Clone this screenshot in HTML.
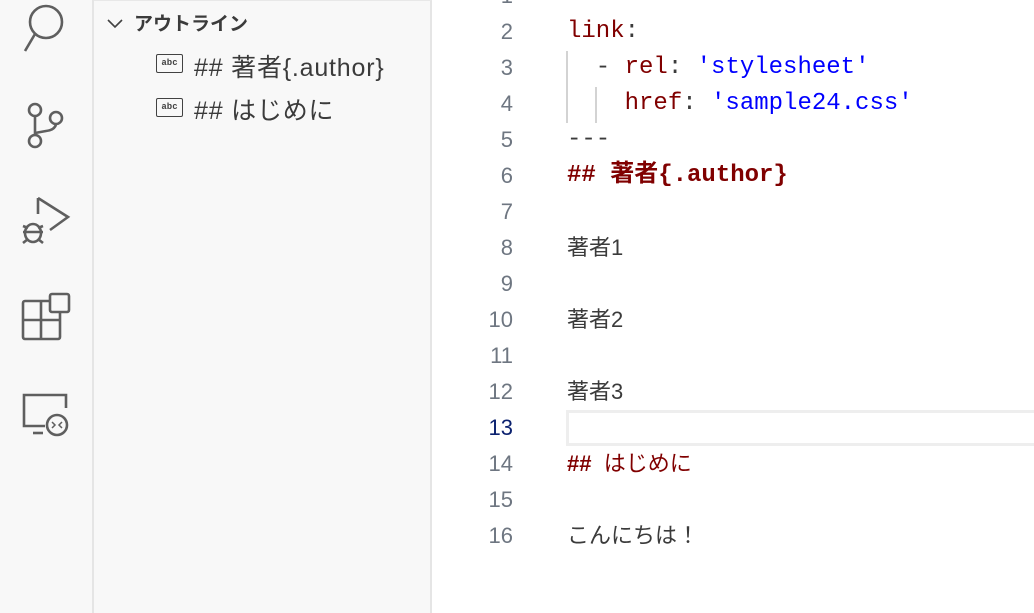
<!DOCTYPE html>
<html><head><meta charset="utf-8"><style>
html,body{margin:0;padding:0;width:1034px;height:613px;overflow:hidden;background:#fff}
body{position:relative;font-family:"Liberation Sans","Noto Sans CJK JP",sans-serif}
#act{position:absolute;left:0;top:0;width:92px;height:613px;background:#f8f8f8;border-right:2px solid #e5e5e5}
#side{position:absolute;left:94px;top:0;width:338px;height:613px;background:#f8f8f8;border-right:2px solid #e5e5e5;border-top:1px solid #e8e8e8;box-sizing:border-box}
.s{position:absolute;white-space:nowrap;color:#3b3b3b}
.ln{position:absolute;left:440px;width:73px;text-align:right;font-size:22px;color:#6e7681;line-height:36px;font-family:"Liberation Sans","Noto Sans CJK JP",sans-serif}
.c{position:absolute;left:567px;font-size:24px;line-height:36px;white-space:pre;font-family:"Liberation Mono","Noto Sans CJK JP",monospace;color:#3b3b3b}
.k{color:#800000}.v{color:#0000ff}
.j{font-family:"Liberation Sans","Noto Sans CJK JP",sans-serif;font-size:22px}
.abc{position:absolute;width:25px;height:17px;border:1.5px solid #424242;border-radius:2px;font-size:9px;font-family:"Liberation Mono",monospace;text-align:center;line-height:17px;color:#424242;font-weight:bold}
</style></head><body>
<div id="act">
<svg width="92" height="613" style="position:absolute;left:0;top:0" fill="none" stroke="#5f5f5f" stroke-width="2.6">
<circle cx="46" cy="22" r="16"/><line x1="35" y1="34" x2="25" y2="51"/>
<circle cx="35" cy="110" r="6"/><circle cx="56" cy="118" r="6"/><circle cx="35" cy="141" r="6"/>
<line x1="35" y1="116" x2="35" y2="135"/><path d="M56 124 Q55 130 46 131 L35 133"/>
<path d="M38 198 L68 217 L50 230"/><line x1="38" y1="198" x2="38" y2="214"/>
<ellipse cx="33" cy="233" rx="8" ry="9"/><line x1="23" y1="232" x2="43" y2="232"/><line x1="23" y1="226" x2="28" y2="228"/><line x1="23" y1="243" x2="28" y2="239"/><line x1="43" y1="243" x2="38" y2="239"/><line x1="43" y1="226" x2="38" y2="228"/>
<rect x="23" y="301" width="37" height="38" rx="2"/><line x1="41" y1="301" x2="41" y2="339"/><line x1="23" y1="320" x2="60" y2="320"/>
<rect x="50" y="294" width="19" height="18" rx="2" fill="#f8f8f8"/>
<path d="M45 426 L24 426 L24 395 L66 395 L66 408"/><line x1="33" y1="433" x2="43" y2="433"/>
<circle cx="57" cy="425" r="10" fill="#f8f8f8"/><path d="M52 422 L55 425 L52 428 M62 422 L59 425 L62 428" stroke-width="1.5"/>
</svg>
</div>
<div id="side">
<svg width="20" height="20" style="position:absolute;left:11px;top:12px" fill="none" stroke="#424242" stroke-width="1.6"><path d="M3 7 L10 14 L17 7"/></svg>
<div class="s" style="left:40px;top:8px;font-size:19px;font-weight:bold">アウトライン</div>
<div class="abc" style="left:62px;top:53px">abc</div>
<div class="s" style="left:100px;top:47px;font-size:25px;letter-spacing:0.8px">## 著者{.author}</div>
<div class="abc" style="left:62px;top:97px">abc</div>
<div class="s" style="left:100px;top:90px;font-size:25px;letter-spacing:0.8px">## はじめに</div>
</div>
<div style="position:absolute;left:566px;top:410px;width:480px;height:36px;border:3px solid #eeeeee;box-sizing:border-box"></div>
<div style="position:absolute;left:566px;top:51px;width:2px;height:72px;background:#d3d3d3"></div>
<div style="position:absolute;left:595px;top:87px;width:2px;height:36px;background:#d3d3d3"></div>
<div class="ln" style="top:-22px">1</div>
<div class="ln" style="top:14px">2</div>
<div class="ln" style="top:50px">3</div>
<div class="ln" style="top:86px">4</div>
<div class="ln" style="top:122px">5</div>
<div class="ln" style="top:158px">6</div>
<div class="ln" style="top:194px">7</div>
<div class="ln" style="top:230px">8</div>
<div class="ln" style="top:266px">9</div>
<div class="ln" style="top:302px">10</div>
<div class="ln" style="top:338px">11</div>
<div class="ln" style="top:374px">12</div>
<div class="ln" style="top:410px;color:#0b216f">13</div>
<div class="ln" style="top:446px">14</div>
<div class="ln" style="top:482px">15</div>
<div class="ln" style="top:518px">16</div>
<div class="c" style="top:14px"><span class="k">link</span>:</div>
<div class="c" style="top:50px">  - <span class="k">rel</span>: <span class="v">'stylesheet'</span></div>
<div class="c" style="top:86px">    <span class="k">href</span>: <span class="v">'sample24.css'</span></div>
<div class="c" style="top:122px">---</div>
<div class="c k" style="top:158px;font-weight:bold">## 著者{.author}</div>
<div class="c j" style="top:230px">著者1</div>
<div class="c j" style="top:302px">著者2</div>
<div class="c j" style="top:374px">著者3</div>
<div class="c k j" style="top:446px"><b>##</b>  はじめに</div>
<div class="c j" style="top:518px">こんにちは！</div>
</body></html>
